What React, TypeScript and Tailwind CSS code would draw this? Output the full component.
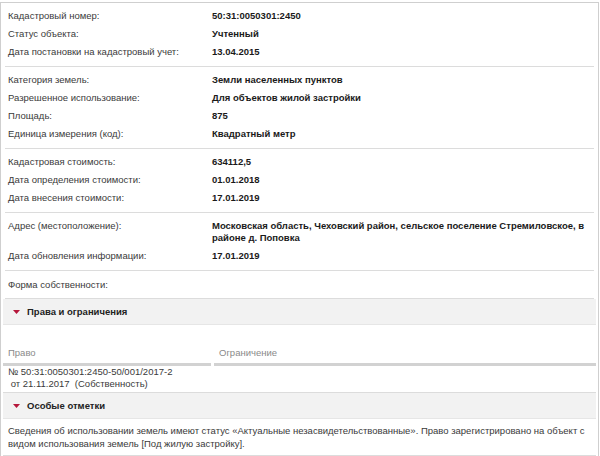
import React from "react";

const groups: [string, string][][] = [
  [
    ["Кадастровый номер:", "50:31:0050301:2450"],
    ["Статус объекта:", "Учтенный"],
    ["Дата постановки на кадастровый учет:", "13.04.2015"],
  ],
  [
    ["Категория земель:", "Земли населенных пунктов"],
    ["Разрешенное использование:", "Для объектов жилой застройки"],
    ["Площадь:", "875"],
    ["Единица измерения (код):", "Квадратный метр"],
  ],
  [
    ["Кадастровая стоимость:", "634112,5"],
    ["Дата определения стоимости:", "01.01.2018"],
    ["Дата внесения стоимости:", "17.01.2019"],
  ],
  [
    [
      "Адрес (местоположение):",
      "Московская область, Чеховский район, сельское поселение Стремиловское, в районе д. Поповка",
    ],
    ["Дата обновления информации:", "17.01.2019"],
  ],
];

function Tri() {
  return (
    <svg width="7" height="4" viewBox="0 0 7 4" className="shrink-0">
      <polygon points="0,0 7,0 3.5,4" fill="#b5173a" />
    </svg>
  );
}

function Bar({ title }: { title: string }) {
  return (
    <div className="mx-[2px] h-[26px] bg-[#f2f2f2] border-b border-[#e6e6e6] flex items-center pl-[10px] gap-[7px]">
      <Tri />
      <span className="font-bold text-[#222]">{title}</span>
    </div>
  );
}

export default function App() {
  return (
    <div className="w-[600px] h-[456px] bg-white overflow-hidden text-[9.5px] leading-[12px] text-[#3a3a3a] font-['Liberation_Sans',Arial,sans-serif]">
      <div className="mt-[2px] w-[599px] border-l border-r border-t border-[#cfcfcf]">
        {groups.map((g, i) => (
          <div key={i} className="mx-[4px] pt-[4px] pb-[5px] border-b border-[#dcdcdc]">
            {g.map(([l, v]) => (
              <div key={l} className="flex py-[3px]">
                <div className="w-[207px] shrink-0 pl-[3px]">{l}</div>
                <div className="flex-1 pr-[4px] font-bold text-[#1a1a1a]">{v}</div>
              </div>
            ))}
          </div>
        ))}
        <div className="mx-[4px] pt-[5px] pb-[4px] border-b border-[#dcdcdc]">
          <div className="flex py-[3px]">
            <div className="w-[207px] shrink-0 pl-[3px]">Форма собственности:</div>
          </div>
        </div>
        <Bar title="Права и ограничения" />
        <div className="flex pt-[22px] mx-[2px]">
          <div className="w-[208px] pl-[5px] pb-[4px] border-b-[3px] border-[#d2d2d2] text-[#8a8a8a]">Право</div>
          <div className="flex-1 ml-[3px] pl-[5px] pb-[4px] border-b-[3px] border-[#d2d2d2] text-[#8a8a8a]">Ограничение</div>
        </div>
        <div className="mx-[2px] pl-[5px] pt-0 pb-[2px] border-b border-[#dcdcdc] whitespace-pre">
          <div>№ 50:31:0050301:2450-50/001/2017-2</div>
          <div> от 21.11.2017  (Собственность)</div>
        </div>
        <Bar title="Особые отметки" />
        <div className="mx-[2px] pl-[5px] pr-[8px] pt-[5px] pb-[5px] border-b border-[#dcdcdc] leading-[13px]">
          Сведения об использовании земель имеют статус «Актуальные незасвидетельствованные». Право зарегистрировано на объект с видом использования земель [Под жилую застройку].
        </div>
      </div>
    </div>
  );
}
